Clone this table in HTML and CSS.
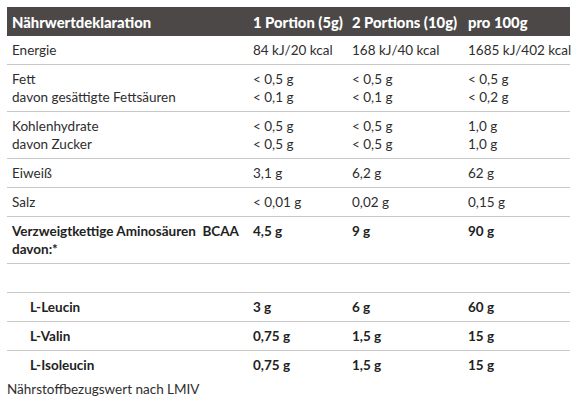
FILE: index.html
```html
<!DOCTYPE html>
<html lang="de">
<head>
  <meta charset="UTF-8">
  <title>Nährwertdeklaration</title>
  <link rel="stylesheet" href="styles.css">
</head>
<body>
  <table class="nutrition">
    <colgroup>
      <col class="c-name">
      <col class="c-one">
      <col class="c-two">
      <col class="c-hundred">
    </colgroup>
    <thead>
      <tr>
        <th>Nährwertdeklaration</th>
        <th>1 Portion (5g)</th>
        <th>2 Portions (10g)</th>
        <th>pro 100g</th>
      </tr>
    </thead>
    <tbody>
      <tr>
        <td>Energie</td>
        <td>84 kJ/20 kcal</td>
        <td>168 kJ/40 kcal</td>
        <td>1685 kJ/402 kcal</td>
      </tr>
      <tr>
        <td>Fett<br>davon gesättigte Fettsäuren</td>
        <td>&lt; 0,5 g<br>&lt; 0,1 g</td>
        <td>&lt; 0,5 g<br>&lt; 0,1 g</td>
        <td>&lt; 0,5 g<br>&lt; 0,2 g</td>
      </tr>
      <tr>
        <td>Kohlenhydrate<br>davon Zucker</td>
        <td>&lt; 0,5 g<br>&lt; 0,5 g</td>
        <td>&lt; 0,5 g<br>&lt; 0,5 g</td>
        <td>1,0 g<br>1,0 g</td>
      </tr>
      <tr>
        <td>Eiweiß</td>
        <td>3,1 g</td>
        <td>6,2 g</td>
        <td>62 g</td>
      </tr>
      <tr>
        <td>Salz</td>
        <td>&lt; 0,01 g</td>
        <td>0,02 g</td>
        <td>0,15 g</td>
      </tr>
      <tr class="strong">
        <td>Verzweigtkettige Aminosäuren &nbsp;BCAA<br>davon:*</td>
        <td>4,5 g</td>
        <td>9 g</td>
        <td>90 g</td>
      </tr>
      <tr class="empty">
        <td>&nbsp;</td>
        <td></td>
        <td></td>
        <td></td>
      </tr>
      <tr class="strong sub">
        <td>L-Leucin</td>
        <td>3 g</td>
        <td>6 g</td>
        <td>60 g</td>
      </tr>
      <tr class="strong sub">
        <td>L-Valin</td>
        <td>0,75 g</td>
        <td>1,5 g</td>
        <td>15 g</td>
      </tr>
      <tr class="strong sub last">
        <td>L-Isoleucin</td>
        <td>0,75 g</td>
        <td>1,5 g</td>
        <td>15 g</td>
      </tr>
    </tbody>
  </table>
  <p class="footnote">Nährstoffbezugswert nach LMIV</p>
</body>
</html>
```

FILE: styles.css
```css
body {
  margin: 0;
  padding: 7px 10px 0 7px;
  background: #fff;
  color: #2e2e2e;
  font-family: Lato, "Open Sans", sans-serif;
  font-size: 13.5px;
  line-height: 18px;
}
.nutrition {
  width: 563px;
  border-collapse: collapse;
  table-layout: fixed;
}
.c-name { width: 241px; }
.c-one { width: 99px; }
.c-two { width: 116px; }
.c-hundred { width: 107px; }
.nutrition th {
  background: #4b4847;
  color: #fff;
  font-size: 14.8px;
  font-weight: 900;
  text-align: left;
  padding: 6px 5px 5px;
  white-space: nowrap;
}
.nutrition td {
  padding: 5px 5px 5px;
  border-bottom: 1px solid #c8c8c8;
  vertical-align: top;
  white-space: nowrap;
}
.strong td {
  font-weight: 700;
  color: #222;
}
.sub td:first-child {
  padding-left: 23px;
}
.last td {
  border-bottom: none;
}
.footnote {
  margin: 0;
  padding-top: 1px;
}
```
